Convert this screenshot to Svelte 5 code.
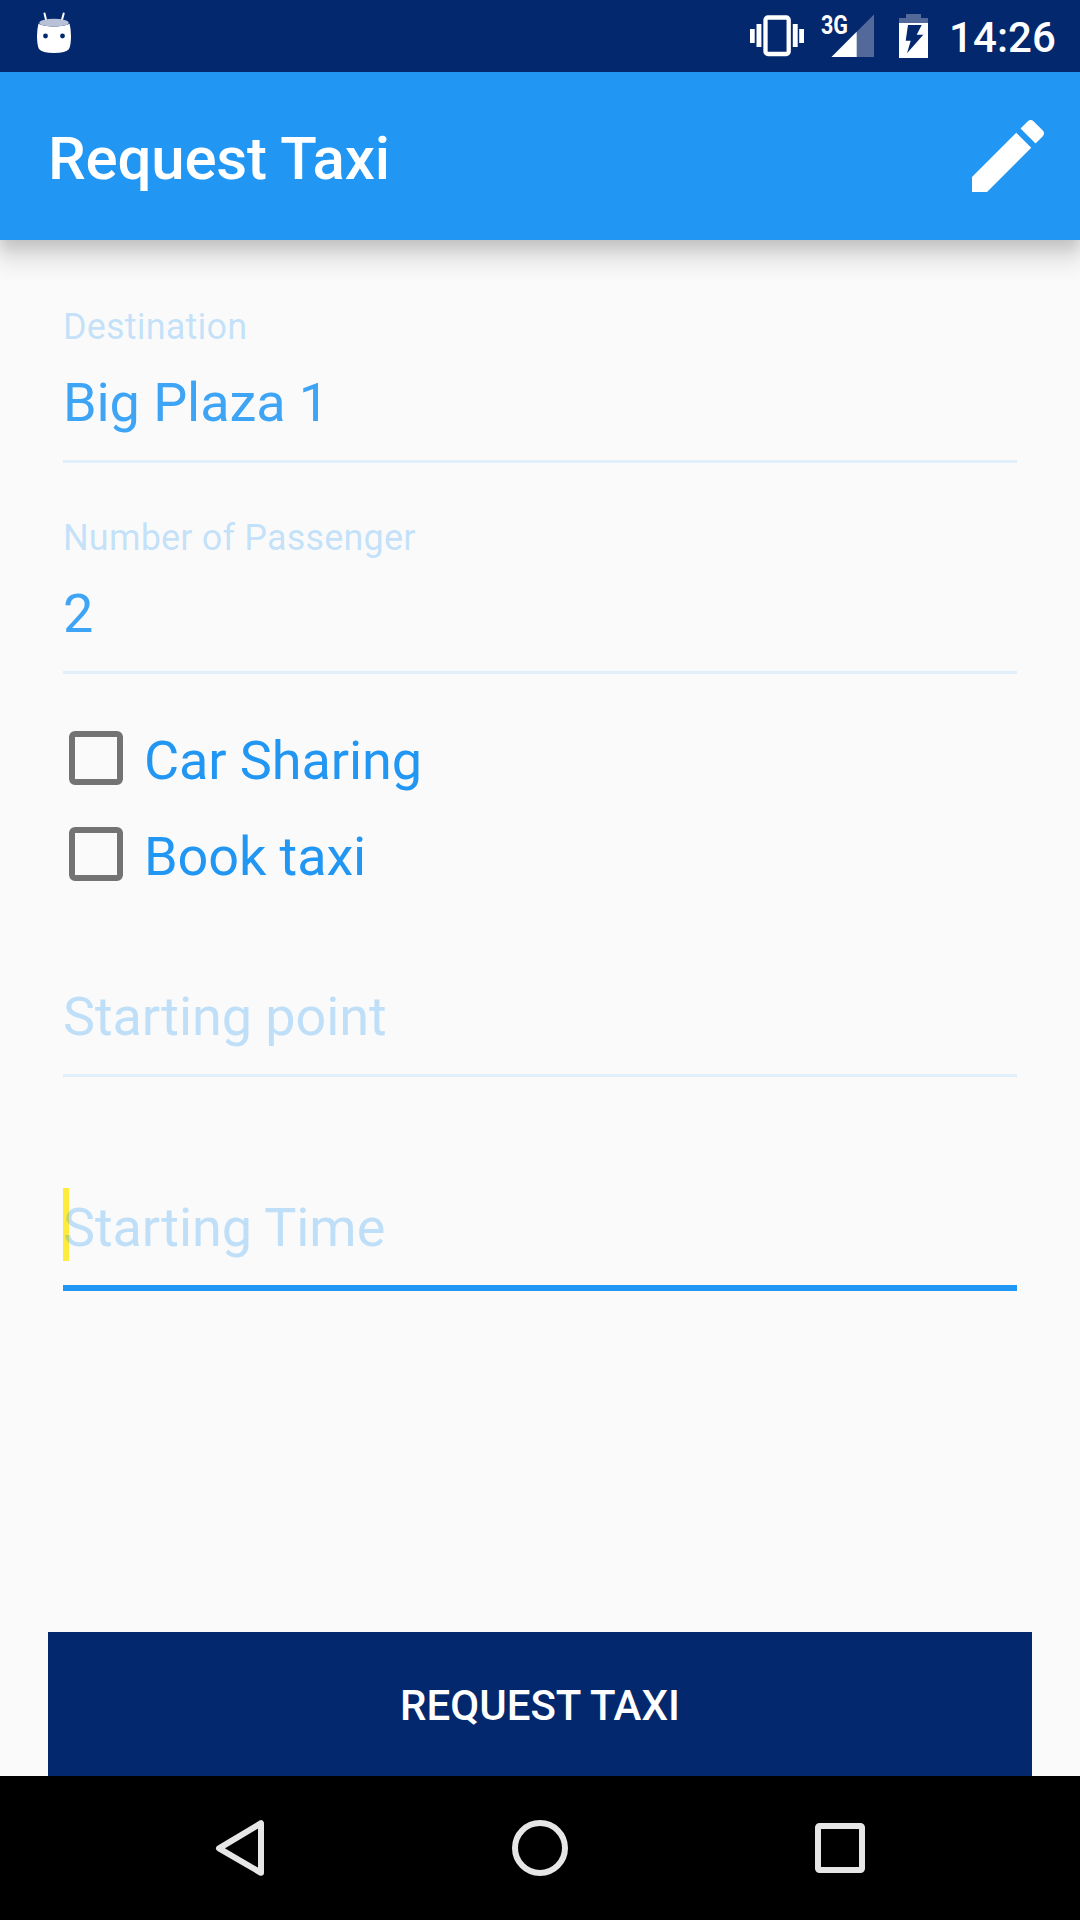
<script>
  const filled = [
    { label: 'Destination', value: 'Big Plaza 1' },
    { label: 'Number of Passenger', value: '2' },
  ];
  const options = ['Car Sharing', 'Book taxi'];
  const empty = [
    { hint: 'Starting point', focused: false },
    { hint: 'Starting Time', focused: true },
  ];
</script>

<div class="screen">
  <header class="status">
    <svg class="droid" width="40" height="72" viewBox="34 0 40 72">
      <path d="M44.500 13.500 46.600 22M63.700 13.500 61.400 22" stroke="#fff" stroke-width="2" stroke-linecap="round" />
      <path d="M38.500 23.500C43 27.500 65 27.500 69.500 23.500Q71 29 71 36Q71 45 69 49Q66 53 54 53Q42 53 39 49Q37 45 37 36Q37 29 38.500 23.500Z" fill="#fff" />
      <ellipse cx="54" cy="22.700" rx="14.800" ry="3.900" fill="#b9c1d6" />
      <circle cx="45.500" cy="36" r="2.400" fill="#03286e" />
      <circle cx="62.500" cy="36" r="2.400" fill="#03286e" />
    </svg>
    <div class="indicators">
      <svg width="54" height="72" viewBox="750 0 54 72" fill="#fff">
        <rect x="765.500" y="17.500" width="23.200" height="36.500" rx="2.500" fill="none" stroke="#fff" stroke-width="4.300" />
        <rect x="750" y="29" width="4.700" height="14" />
        <rect x="756.500" y="24" width="4.900" height="23" />
        <rect x="792.800" y="24" width="4.900" height="23" />
        <rect x="799.200" y="29" width="4.800" height="14" />
      </svg>
      <svg class="signal" width="54" height="72" viewBox="820 0 54 72">
        <path d="M831.500 57 874 14.500V57Z" fill="#52699a" />
        <path d="M831.500 57 856.700 31.800V57Z" fill="#fff" />
        <text x="821" y="33.500" textLength="27" lengthAdjust="spacingAndGlyphs">3G</text>
      </svg>
      <svg class="battery" width="29" height="72" viewBox="899 0 29 72">
        <path d="M899 23V18H906V14H921V18H928V23Z" fill="#52699a" />
        <path d="M899 23H928V58H899Z" fill="#fff" />
        <path d="M908 25H921.700L916.700 34.700H923.300L907 53.300 910.700 40.700H905.700Z" fill="#03286e" />
      </svg>
      <span class="clock">14:26</span>
    </div>
  </header>

  <div class="appbar">
    <h1>Request Taxi</h1>
    <svg width="96" height="96" viewBox="0 0 24 24" fill="#fff">
      <path d="M3 17.250V21h3.750L17.810 9.940l-3.750-3.750L3 17.250zM20.710 7.040c.39-.39.39-1.020 0-1.410l-2.340-2.340c-.39-.39-1.020-.39-1.410 0l-1.830 1.830 3.750 3.750 1.830-1.830z" />
    </svg>
  </div>

  <main>
    <div class="fields">
      {#each filled as f}
        <div class="field">
          <div class="label">{f.label}</div>
          <div class="value">{f.value}</div>
          <div class="line"></div>
        </div>
      {/each}
    </div>
    <div class="options">
      {#each options as o}
        <div class="option"><span class="box"></span><span class="option-text">{o}</span></div>
      {/each}
    </div>
    <div class="fields">
      {#each empty as f}
        <div class="field">
          <div class="label"></div>
          <div class="value hint">
            {#if f.focused}<i class="caret"></i>{/if}<span>{f.hint}</span>
          </div>
          <div class="line" class:focused={f.focused}></div>
        </div>
      {/each}
    </div>
    <button>REQUEST TAXI</button>
  </main>

  <nav>
    <svg width="60" height="60" viewBox="210 1818 60 60">
      <path d="M219 1848.300 261 1823.200V1872.800Z" />
    </svg>
    <svg width="60" height="60" viewBox="510 1818 60 60"><circle cx="540" cy="1848" r="25" /></svg>
    <svg width="60" height="60" viewBox="810 1818 60 60"><rect x="818" y="1826" width="44" height="44" rx="1.500" /></svg>
  </nav>
</div>

<style>
  :global(body) {
    margin: 0;
  }
  .screen {
    width: 1080px;
    height: 1920px;
    display: flex;
    flex-direction: column;
    background: #fafafa;
    font-family: Roboto, sans-serif;
    overflow: hidden;
  }
  svg {
    display: block;
    flex: none;
  }
  .status {
    height: 72px;
    flex: none;
    box-sizing: border-box;
    padding: 0 24px 0 34px;
    display: flex;
    justify-content: space-between;
    background: #03286e;
    color: #fff;
  }
  .indicators {
    display: flex;
  }
  .signal {
    margin-left: 16px;
  }
  .signal text {
    font-size: 25.500px;
    font-weight: 700;
    fill: #fff;
  }
  .battery {
    margin: 0 21px 0 25px;
  }
  .clock {
    font-size: 42px;
    font-weight: 500;
    line-height: 75px;
    letter-spacing: 0.1px;
  }
  .appbar {
    position: relative;
    z-index: 1;
    height: 168px;
    flex: none;
    box-sizing: border-box;
    padding: 0 24px 0 48px;
    display: flex;
    align-items: center;
    justify-content: space-between;
    background: #2196f3;
    color: #fff;
  }
  /* Soft elevation shadow that fades at both screen edges */
  .appbar::after {
    content: '';
    position: absolute;
    left: 0;
    right: 0;
    top: 100%;
    height: 42px;
    background: linear-gradient(
      rgba(0, 0, 0, 0.215),
      rgba(0, 0, 0, 0.170) 15%,
      rgba(0, 0, 0, 0.100) 33%,
      rgba(0, 0, 0, 0.050) 52%,
      rgba(0, 0, 0, 0.018) 75%,
      transparent
    );
    mask-image: linear-gradient(
      90deg,
      rgba(0, 0, 0, 0.600),
      rgba(0, 0, 0, 0.900) 8px,
      #000 16px,
      #000 calc(100% - 16px),
      rgba(0, 0, 0, 0.900) calc(100% - 8px),
      rgba(0, 0, 0, 0.600)
    );
  }
  h1 {
    margin: 0;
    padding-top: 5px;
    font-size: 60px;
    font-weight: 500;
    line-height: 72px;
    letter-spacing: -0.200px;
  }
  main {
    height: 1536px;
    flex: none;
    box-sizing: border-box;
    padding: 66px 48px 0;
    display: flex;
    flex-direction: column;
  }
  .fields {
    display: flex;
    flex-direction: column;
    gap: 54px;
    padding: 0 15px;
  }
  .label {
    height: 42px;
    margin-bottom: 23px;
    font-size: 36px;
    line-height: 42px;
    letter-spacing: 0.180px;
    color: rgba(33, 150, 243, 0.26);
  }
  .value {
    position: relative;
    height: 64px;
    margin-bottom: 25px;
    font-size: 54px;
    line-height: 64px;
    letter-spacing: -0.090px;
    color: rgba(33, 150, 243, 0.87);
  }
  .value.hint {
    color: rgba(33, 150, 243, 0.27);
  }
  .value span {
    position: relative;
  }
  .caret {
    position: absolute;
    left: 0;
    top: -8px;
    width: 6px;
    height: 73px;
    background: #ffeb3b;
  }
  .line {
    height: 3px;
    background: #e0effa;
  }
  .line.focused {
    height: 6px;
    background: #2196f3;
  }
  .options {
    padding: 36px 21px 18px;
  }
  .option {
    height: 96px;
    display: flex;
    align-items: center;
    gap: 21px;
  }
  .box {
    width: 54px;
    height: 54px;
    box-sizing: border-box;
    border: 6px solid #737373;
    border-radius: 6px;
  }
  .option-text {
    padding-top: 5px;
    font-size: 54px;
    line-height: 64px;
    letter-spacing: -0.090px;
    color: #2196f3;
  }
  button {
    height: 144px;
    margin-top: auto;
    padding: 4px 0 0;
    border: 0;
    background: #03286e;
    color: #fff;
    font: 500 42px/50px Roboto, sans-serif;
  }
  nav {
    height: 144px;
    flex: none;
    box-sizing: border-box;
    padding: 0 210px;
    display: flex;
    align-items: center;
    justify-content: space-between;
    background: #000;
  }
  nav svg {
    fill: none;
    stroke: #e6e6e6;
    stroke-width: 6px;
    stroke-linejoin: round;
  }
</style>
